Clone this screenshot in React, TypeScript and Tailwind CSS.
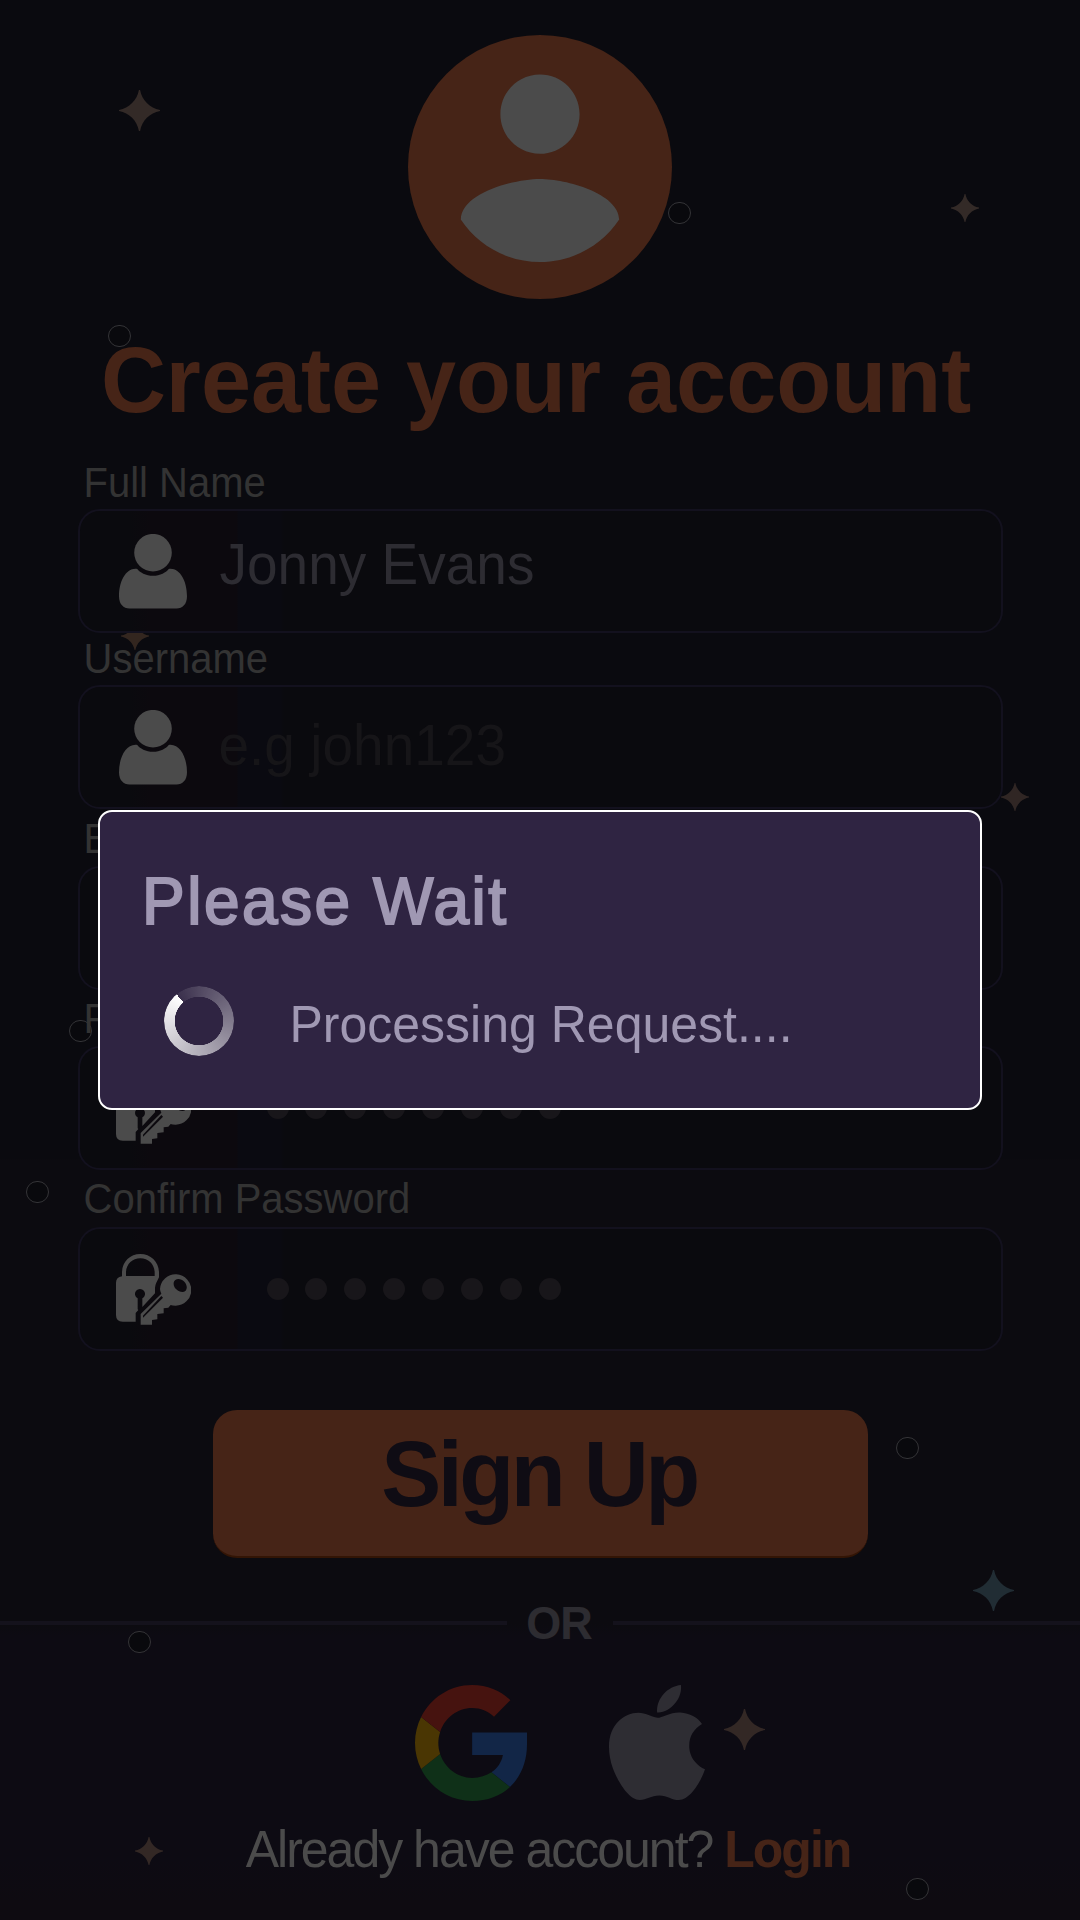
import React from "react";

type Mark = { x: number; y: number; size: number; color?: string };

const stars: Mark[] = [
  { x: 139.5, y: 110.5, size: 41, color: "#332a27" },
  { x: 965, y: 208, size: 28, color: "#332a27" },
  { x: 135, y: 636, size: 28, color: "#33261f" },
  { x: 1015, y: 797, size: 28, color: "#302624" },
  { x: 993.5, y: 1590.5, size: 41, color: "#212d34" },
  { x: 744.5, y: 1729.5, size: 41, color: "#332825" },
  { x: 149, y: 1851, size: 28, color: "#332825" },
];

const rings = [
  { left: 108, top: 325 },
  { left: 668, top: 202 },
  { left: 69, top: 1020 },
  { left: 26, top: 1181 },
  { left: 896, top: 1437 },
  { left: 128, top: 1631 },
  { left: 906, top: 1878 },
];

function Decorations() {
  return (
    <div className="pointer-events-none absolute inset-0">
      {stars.map((s, i) => (
        <svg
          key={i}
          className="absolute"
          style={{ left: s.x - s.size / 2, top: s.y - s.size / 2, width: s.size, height: s.size, color: s.color }}
          viewBox="0 0 42 42"
          fill="currentColor"
        >
          <path d="M20.4 0h1.2C23.5 10.500 31.500 18.500 42 20.400v1.200C31.500 23.500 23.500 31.500 21.600 42h-1.200C18.500 31.500 10.500 23.500 0 21.600v-1.200C10.500 18.500 18.500 10.500 20.400 0z" />
        </svg>
      ))}
      {rings.map((r, i) => (
        <div
          key={i}
          className="absolute h-[22px] w-[23px] rounded-full border border-[#343437] bg-[#09090d]"
          style={{ left: r.left, top: r.top }}
        />
      ))}
    </div>
  );
}

function PersonIcon() {
  return (
    <svg className="ml-[39px] h-[75px] w-[68px] shrink-0" viewBox="0 0.3 68 75" fill="#4b4b4b">
      <circle cx="34" cy="19" r="18.800" />
      <path d="M18.300 35.200C20.500 38.500 27 42 34 42s13.500-3.500 15.700-6.800C60.500 33.500 68 47 68 62.500C68 70.500 63.500 74.700 57.500 74.700h-47C4.500 74.700 0 70.500 0 62.500C0 47 7.500 33.500 18.300 35.200z" />
    </svg>
  );
}

function LockKeyIcon() {
  return (
    <svg className="ml-[36px] h-[71px] w-[75px] shrink-0" viewBox="48 42 225 213" fill="#4b4b4b">
      <path
        fillRule="evenodd"
        d="M66 109V98C66 65 90 42 121 42s56 23 56 56v14l-8 16q-4 8-4 16v16l-38 41v-26a15 15 0 1 0-14 0v33l2 2-8 9v26H68q-20 0-20-20V128q0-16 18-19zM78 108h86V98c0-25-19-43-43-43S78 73 78 98z"
      />
      <path
        fillRule="evenodd"
        d="M122 222l62-61q-4-8-4-14a47 47 0 1 1 46 50q-9 0-14-2l-7 8-14 2v15l-19 2v16l-16 2v14h-34zM129 227v6l60-60-5-5zM226 120c-8 6-6 19 2 27s21 13 28 6 5-20-3-28-20-11-27-5z"
      />
    </svg>
  );
}

function Field({
  label,
  spacing,
  labelGap,
  children,
}: {
  label: string;
  spacing: string;
  labelGap: string;
  children: React.ReactNode;
}) {
  return (
    <div className={spacing}>
      <div className={`${labelGap} h-[46px] pl-[6px] text-[40px] leading-[46px] text-[#333333]`}>
        <span className="inline-block origin-[0_37px] translate-y-[0.4px] scale-y-[1.04]">{label}</span>
      </div>
      <div className="flex h-[124px] w-[925px] items-center rounded-[22px] border-2 border-[#13111e] bg-[linear-gradient(90deg,#0a0a0e_0,#0a0a0e_50px,#0c090e_70px,#0c090e_157px,#0a0a11_158px,#0a0a11_200px,#0a0a0e_204px)]">
        {children}
      </div>
    </div>
  );
}

function PasswordDots() {
  return (
    <div className="ml-[76px] flex gap-[16.9px]">
      {Array.from({ length: 8 }, (_, i) => (
        <span key={i} className="size-[22px] rounded-full bg-[#18161a]" />
      ))}
    </div>
  );
}

function GoogleLogo() {
  return (
    <svg className="h-[116px] w-[112px]" viewBox="1 1 21.56 22" preserveAspectRatio="none">
      <path fill="#122647" d="M22.560 12.250c0-.78 0-1.530 0-2.250H12v4.260h5.920c-.26 1.370-1.040 2.530-2.210 3.310l3.570 2.770c2.080-1.920 3.280-4.740 3.280-8.090z" />
      <path fill="#0f3018" d="M12 23c2.970 0 5.460-.98 7.280-2.660l-3.570-2.770c-.98.66-2.230 1.060-3.710 1.060-2.860 0-5.290-1.930-6.160-4.530L2.180 16.940C3.990 20.530 7.700 23 12 23z" />
      <path fill="#4a3603" d="M5.840 14.090c-.22-.66-.35-1.360-.35-2.090s.13-1.430.35-2.090L2.180 7.070C1.430 8.550 1 10.220 1 12s.43 3.450 1.180 4.930l3.660-2.840z" />
      <path fill="#46130f" d="M12 5.380c1.620 0 3.060.56 4.210 1.640l3.150-3.150C17.450 2.090 14.970 1 12 1 7.700 1 3.990 3.470 2.180 7.070l3.660 2.840c.87-2.600 3.300-4.530 6.160-4.530z" />
    </svg>
  );
}

function AppleLogo() {
  return (
    <svg className="h-[115px] w-[96px]" viewBox="4 32 376.400 448" preserveAspectRatio="none" fill="#2e2d33">
      <path d="M318.700 268.700c-.2-36.700 16.400-64.400 50-84.800-18.800-26.900-47.200-41.700-84.700-44.600-35.500-2.800-74.300 20.700-88.500 20.700-15 0-49.400-19.700-76.400-19.700C63.300 141.200 4 184.800 4 273.500q0 39.300 14.400 81.200c12.800 36.700 59 126.700 107.200 125.200 25.200-.6 43-17.900 75.800-17.900 31.800 0 48.300 17.900 76.400 17.900 48.600-.7 90.400-82.500 102.600-119.300-65.200-30.700-61.700-90-61.700-91.900zm-56.600-164.200c27.300-32.400 24.800-61.900 24-72.500-24.100 1.400-52 16.400-67.900 34.900-17.500 19.800-27.800 44.300-25.600 71.900 26.100 2 49.900-11.400 69.500-34.300z" />
    </svg>
  );
}

function ProgressDialog() {
  return (
    <div
      role="dialog"
      className="absolute top-[810px] left-[98px] h-[300px] w-[884px] rounded-[14px] border-2 border-white bg-[#2f2442] text-[#a098b3]"
    >
      <h2 className="mt-[53px] ml-[42px] h-[74px] text-[64px] leading-[74px] font-normal tracking-[2.5px] [-webkit-text-stroke:2px_#a098b3]">
        <span className="inline-block origin-[0_59px] scale-y-[1.04]">Please Wait</span>
      </h2>
      <div className="mt-[47px] ml-[64px] flex h-[70px]">
        <div className="size-[70px] rounded-full bg-[conic-gradient(from_320deg,rgba(255,255,255,0.06),#ffffff)] [mask:radial-gradient(closest-side,transparent_24px,black_24.5px)]" />
        <p className="mt-[11px] ml-[55.500px] h-[56px] text-[50px] leading-[56px] whitespace-nowrap">
          <span className="inline-block origin-[0_45px] scale-y-[1.04]">Processing Request....</span>
        </p>
      </div>
    </div>
  );
}

export default function App() {
  return (
    <div className="relative h-[1920px] w-[1080px] overflow-hidden bg-[linear-gradient(180deg,#0a0a0f_0,#0a0a0f_1159px,#0c0b10_1160px,#0c0b10_1624px,#0d0b13_1636px,#0d0b13_1860px,#0e0b11_1900px)] font-['Liberation_Sans',Arial,sans-serif]">
      <Decorations />
      <main className="relative flex flex-col items-center pt-[35px]">
        <svg className="size-[264px]" viewBox="2 2 20 20">
          <circle cx="12" cy="12" r="10" fill="#462417" />
          <path
            fill="#4b4b4b"
            d="M12 5c1.660 0 3 1.340 3 3s-1.340 3-3 3-3-1.340-3-3 1.340-3 3-3zm0 14.200c-2.500 0-4.710-1.280-6-3.220.03-1.990 4-3.080 6-3.080 1.990 0 5.970 1.090 6 3.080-1.290 1.940-3.500 3.220-6 3.220z"
          />
        </svg>
        <h1 className="mt-[32px] h-[100px] pr-[8px] text-[90px] leading-[100px] font-bold whitespace-nowrap text-[#462417]">
          <span className="inline-block origin-[0_81px] scale-y-[1.03]">Create your account</span>
        </h1>

        <form className="w-[925px]">
          <Field label="Full Name" spacing="mt-[29px]" labelGap="mb-[3px]">
            <PersonIcon />
            <span className="mb-[12px] ml-[33px] text-[55px] leading-[62px] text-[#2d2c32]">
              <span className="inline-block origin-[0_50px] scale-y-[1.04]">Jonny Evans</span>
            </span>
          </Field>
          <Field label="Username" spacing="mt-[3px]" labelGap="mb-[3px]">
            <PersonIcon />
            <span className="mb-[2px] ml-[32px] text-[55px] leading-[62px] text-[#161518]">
              <span className="inline-block origin-[0_50px] scale-y-[1.04]">e.g john123</span>
            </span>
          </Field>
          <Field label="Email" spacing="mt-[7px]" labelGap="mb-[4px]">
            {null}
          </Field>
          <Field label="Password" spacing="mt-[6px]" labelGap="mb-[4px]">
            <LockKeyIcon />
            <PasswordDots />
          </Field>
          <Field label="Confirm Password" spacing="mt-[6px]" labelGap="mb-[5px]">
            <LockKeyIcon />
            <PasswordDots />
          </Field>
        </form>

        <button className="mt-[59px] ml-[1px] flex h-[148px] w-[655px] justify-center rounded-[24px] border-b-2 border-[#331505] bg-[#462417] pt-[15px] pr-[3px] text-[90px] leading-[100px] font-bold tracking-[-3.500px] text-[#0f0c14]">
          <span className="inline-block origin-[0_81px] scale-y-[1.03]">Sign Up</span>
        </button>

        <div className="mt-[40px] flex h-[50px] w-full items-center">
          <span className="h-1 w-[507px] bg-[#14121c]" />
          <span className="w-[106px] pr-[2px] text-center text-[45px] leading-[50px] font-bold tracking-[-1px] text-[#2d2c31]">
            <span className="inline-block origin-[0_40px] translate-y-[0.6px] scale-y-[1.03]">OR</span>
          </span>
          <span className="h-1 flex-1 bg-[#14121c]" />
        </div>

        <div className="mt-[37px] flex gap-[82px] pl-[40px]">
          <GoogleLogo />
          <AppleLogo />
        </div>

        <p className="mt-[21px] h-[56px] pl-[16px] text-[50px] leading-[56px] tracking-[-2px] whitespace-nowrap text-[#4b4b4b]">
          <span className="inline-block origin-[0_45px] translate-y-[0.5px] scale-y-[1.04]">
            Already have account? <b className="text-[#462417]">Login</b>
          </span>
        </p>
      </main>
      <ProgressDialog />
    </div>
  );
}
